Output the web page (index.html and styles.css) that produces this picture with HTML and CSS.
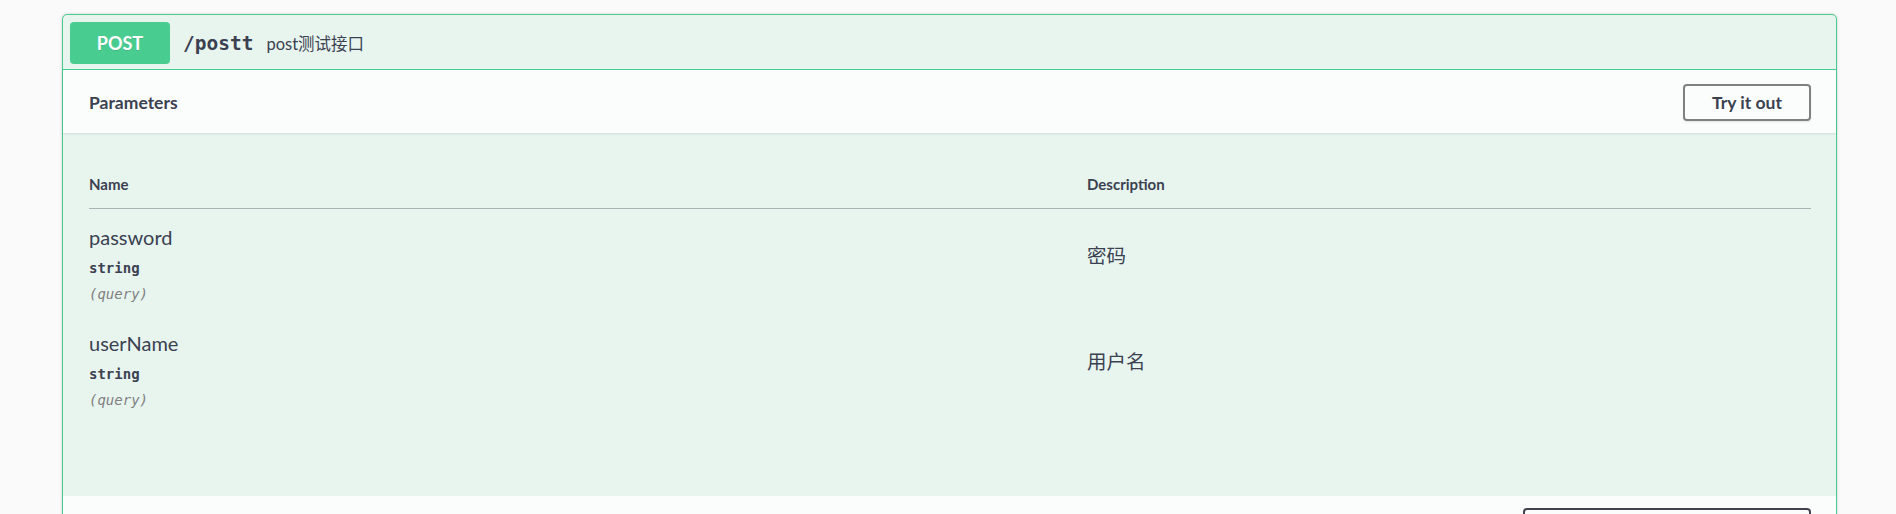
FILE: index.html
```html
<!DOCTYPE html>
<html lang="en">
<head>
    <meta charset="UTF-8">
    <meta name="viewport" content="width=device-width, initial-scale=1.0">
    <title>Swagger UI</title>
    <link rel="stylesheet" href="styles.css">
</head>
<body>
    <div class="opblock opblock-post">
        <div class="opblock-summary">
            <span class="method">POST</span>
            <span class="path">/postt</span>
            <span class="summary-desc">post测试接口</span>
        </div>

        <div class="section-header">
            <h4>Parameters</h4>
            <button class="btn try-out">Try it out</button>
        </div>

        <div class="table-container">
            <table class="parameters">
                <thead>
                    <tr>
                        <th class="col-name">Name</th>
                        <th class="col-desc">Description</th>
                    </tr>
                </thead>
                <tbody>
                    <tr>
                        <td class="col-name">
                            <div class="param-name">password</div>
                            <div class="param-type">string</div>
                            <div class="param-in">(query)</div>
                        </td>
                        <td class="col-desc"><p>密码</p></td>
                    </tr>
                    <tr>
                        <td class="col-name">
                            <div class="param-name">userName</div>
                            <div class="param-type">string</div>
                            <div class="param-in">(query)</div>
                        </td>
                        <td class="col-desc"><p>用户名</p></td>
                    </tr>
                </tbody>
            </table>
        </div>

        <!-- responses header, only its top edge is in view -->
        <div class="section-header responses-header">
            <div class="select"></div>
        </div>
    </div>
</body>
</html>
```

FILE: styles.css
```css
html {
    background-color: #fafafa;
}
body {
    margin: 0;
    padding: 14px 59px 0 62px;
    font-family: Lato, "Noto Sans CJK SC", sans-serif;
    color: #3b4151;
}
.opblock {
    border: 1px solid #49cc90;
    border-radius: 5px;
    background-color: #e8f5ef;
    box-shadow: 0 0 3px rgba(0,0,0,0.19);
}
.opblock-summary {
    display: flex;
    align-items: center;
    padding: 7px 7px 5px;
    border-bottom: 1px solid #49cc90;
}
.method {
    width: 100px;
    height: 42px;
    line-height: 42px;
    text-align: center;
    background-color: #49cc90;
    color: white;
    border-radius: 4px;
    font-size: 18px;
    font-weight: 700;
    text-shadow: 0 1px 0 rgba(0,0,0,0.1);
}
.path {
    padding: 0 13px;
    font-family: "DejaVu Sans Mono", monospace;
    font-size: 19.5px;
    font-weight: 700;
}
.summary-desc {
    font-size: 16.5px;
}
.section-header {
    display: flex;
    align-items: center;
    justify-content: space-between;
    padding: 14px 25px 12px 26px;
    background-color: #fafdfc;
    box-shadow: 0 1px 2px rgba(0,0,0,0.1);
}
.section-header h4 {
    margin: 0;
    font-size: 17.5px;
    font-weight: 700;
}
.btn {
    font-family: Lato, sans-serif;
    font-size: 17.5px;
    font-weight: 700;
    color: #3b4151;
    background: transparent;
    border: 2px solid #808080;
    border-radius: 4px;
    box-shadow: 0 1px 2px rgba(0,0,0,0.1);
    cursor: pointer;
}
.try-out {
    width: 128px;
    height: 37px;
}
.table-container {
    padding: 25px 25px 75px 26px;
}
.parameters {
    width: 100%;
    border-collapse: collapse;
}
.parameters th {
    text-align: left;
    font-size: 15px;
    font-weight: 700;
    line-height: 20px;
    padding: 16px 0 14px;
    border-bottom: 1px solid rgba(59,65,81,0.2);
}
.parameters .col-name {
    width: 998px;
}
.parameters td {
    vertical-align: top;
    padding: 16px 0 11px;
}
.param-name {
    font-size: 20px;
    line-height: 24px;
}
.param-type {
    margin-top: 9px;
    font-family: "DejaVu Sans Mono", monospace;
    font-size: 14px;
    font-weight: 600;
    line-height: 20px;
}
.param-in {
    margin-top: 6px;
    font-family: "DejaVu Sans Mono", monospace;
    font-size: 14px;
    font-style: italic;
    line-height: 20px;
    color: #808080;
}
.parameters td.col-desc {
    padding-top: 35px;
}
.col-desc p {
    margin: 0;
    font-size: 19.5px;
    line-height: 24px;
}
.responses-header {
    justify-content: flex-end;
    padding-top: 12px;
    box-shadow: none;
}
.select {
    width: 288px;
    height: 40px;
    box-sizing: border-box;
    border: 2px solid #41444e;
    border-radius: 4px;
}
```
